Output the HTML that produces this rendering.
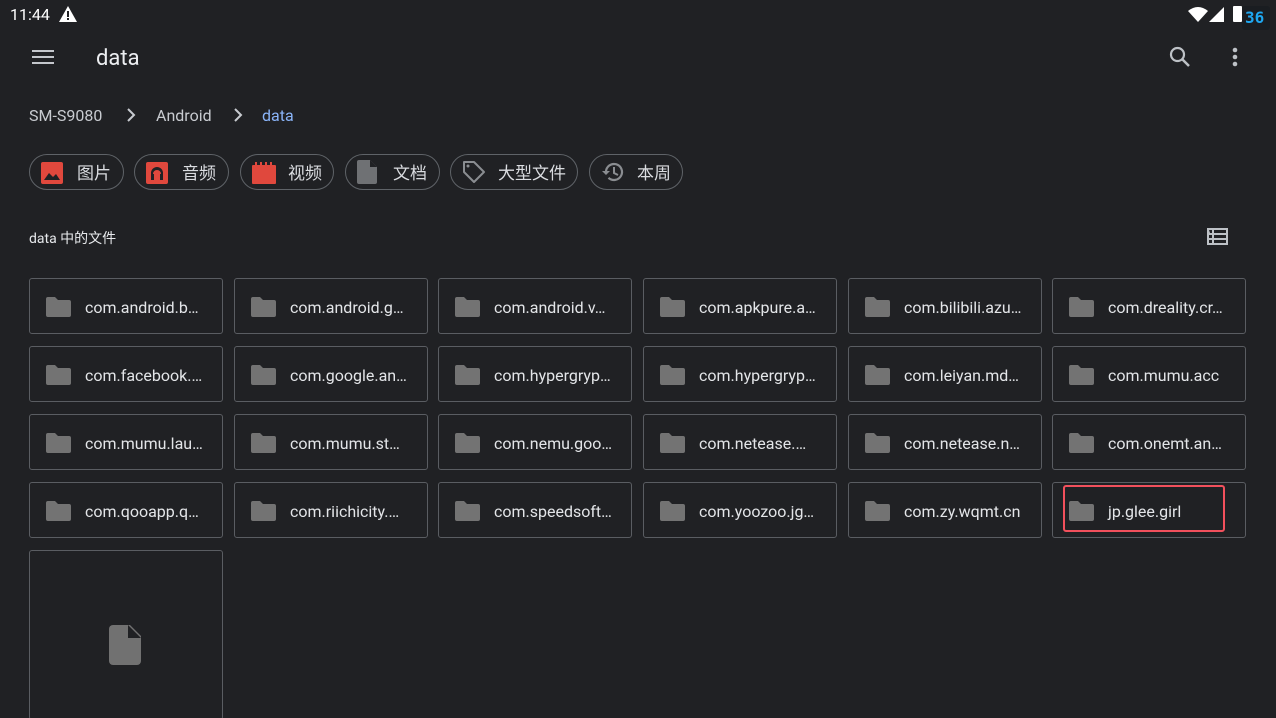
<!DOCTYPE html>
<html><head><meta charset="utf-8"><style>
*{margin:0;padding:0;box-sizing:border-box}
html,body{width:1276px;height:718px;overflow:hidden}
body{background:#202124;position:relative;font-family:"Roboto","Liberation Sans","Noto Sans CJK SC",sans-serif;color:#e8eaed}
.a{position:absolute}
.chip{position:absolute;top:154px;height:36px;border:1px solid #5f6368;border-radius:18px;}
.chip svg{position:absolute;left:11px;top:7px}
.chip span{position:absolute;top:4px;font-size:17px;color:#dadce0;white-space:nowrap}
.card{position:absolute;width:194px;height:56px;border:1.5px solid #5a5d62;border-radius:3px}
.card svg{position:absolute;left:16px;top:18px}
.card span{position:absolute;left:55px;top:19px;font-size:16px;color:#e3e5e8;white-space:nowrap}
</style></head><body>
<div class="a" style="left:10px;top:5px;font-size:16px;color:#fff">11:44</div>
<svg class="a" style="left:59px;top:6px" width="18" height="16" viewBox="0 0 18 16"><path d="M9 0L18 16H0z" fill="#fff"/><rect x="8" y="5" width="2" height="6" fill="#202124"/><rect x="8" y="12" width="2" height="2" fill="#202124"/></svg>
<svg class="a" style="left:1188px;top:7px" width="20" height="15" viewBox="0 0 20 15"><path d="M0 4Q10-4 20 4L10 15z" fill="#fff"/></svg>
<svg class="a" style="left:1209px;top:7px" width="15" height="15"><path d="M15 0V15H0z" fill="#fff"/></svg>
<div class="a" style="left:1233px;top:6px;width:9px;height:16px;background:#fff;border-radius:1px"></div>
<div class="a" style="left:1242px;top:6px;width:28px;height:24px;background:#1a1d21;border-radius:3px;color:#1ea7f0;font-weight:bold;font-size:16px;font-family:'DejaVu Sans Mono',monospace;padding:2px 0 0 3px">36</div>
<svg class="a" style="left:32px;top:50px" width="22" height="15"><rect y="0" width="22" height="2" fill="#c4c7cc"/><rect y="6" width="22" height="2" fill="#c4c7cc"/><rect y="12" width="22" height="2" fill="#c4c7cc"/></svg>
<div class="a" style="left:96px;top:46px;font-size:22px;color:#eceef1">data</div>
<svg class="a" style="left:1169px;top:46px" width="22" height="22" viewBox="0 0 22 22"><circle cx="8.5" cy="8.5" r="6.5" stroke="#bdc1c6" stroke-width="2.2" fill="none"/><path d="M13 13L20 20" stroke="#bdc1c6" stroke-width="2.5"/></svg>
<svg class="a" style="left:1231px;top:47px" width="8" height="22"><circle cx="4" cy="3" r="2.3" fill="#bdc1c6"/><circle cx="4" cy="10" r="2.3" fill="#bdc1c6"/><circle cx="4" cy="17" r="2.3" fill="#bdc1c6"/></svg>
<div class="a" style="left:29px;top:106px;font-size:16px;color:#c8cbd0">SM-S9080</div>
<svg class="a" style="left:126px;top:107px" width="10" height="16"><path d="M2 2L8 8L2 14" stroke="#c8cbd0" stroke-width="2" fill="none"/></svg>
<div class="a" style="left:156px;top:106px;font-size:16px;color:#c8cbd0">Android</div>
<svg class="a" style="left:233px;top:107px" width="10" height="16"><path d="M2 2L8 8L2 14" stroke="#c8cbd0" stroke-width="2" fill="none"/></svg>
<div class="a" style="left:262px;top:106px;font-size:16px;color:#8ab4f8">data</div>

<div class="chip" style="left:29px;width:95px"><svg width="22" height="22"><rect width="22" height="22" rx="2" fill="#e0483d"/><path d="M3 18L8 11L12 15L15 12L19 18z" fill="#202124"/></svg><span style="left:47px">图片</span></div>
<div class="chip" style="left:134px;width:95px"><svg width="22" height="22"><rect width="22" height="22" rx="2" fill="#e0483d"/><path d="M5 18V11a6 6 0 0 1 12 0v7h-3v-6h1a4 4 0 0 0-8 0h1v6z" fill="#202124"/></svg><span style="left:47px">音频</span></div>
<div class="chip" style="left:240px;width:94px"><svg width="24" height="22"><rect y="3" width="24" height="19" rx="1" fill="#e0483d"/><path d="M3 0h2v4h-2zM8 0h2v4h-2zM13 0h2v4h-2zM18 0h2v4h-2z" fill="#e0483d"/></svg><span style="left:47px">视频</span></div>
<div class="chip" style="left:345px;width:95px"><svg width="20" height="24" style="top:5px"><path d="M2 0h11l7 7v15a2 2 0 0 1-2 2H2a2 2 0 0 1-2-2V2a2 2 0 0 1 2-2z" fill="#6f7174"/><path d="M13 0v7h7z" fill="#202124"/></svg><span style="left:47px">文档</span></div>
<div class="chip" style="left:450px;width:128px"><svg width="24" height="24" style="top:5px"><path d="M2 2h10l10 10-10 10L2 12z" stroke="#8a8d91" stroke-width="2" fill="none" stroke-linejoin="round"/><circle cx="6" cy="6" r="1.5" fill="#8a8d91"/></svg><span style="left:47px">大型文件</span></div>
<div class="chip" style="left:589px;width:94px"><svg width="24" height="24" style="top:5px"><path d="M5 12a8 8 0 1 1 2.5 5.8" stroke="#8a8d91" stroke-width="2.2" fill="none"/><path d="M1 11h8l-4 4z" fill="#8a8d91"/><path d="M13 7v6l4 2" stroke="#8a8d91" stroke-width="2" fill="none"/></svg><span style="left:47px">本周</span></div>

<div class="a" style="left:29px;top:228px;font-size:14px;color:#e8eaed">data 中的文件</div>
<svg class="a" style="left:1207px;top:228px" width="21" height="17"><rect x="0" y="0" width="21" height="17" fill="#bdc1c6"/><path d="M2 2h3v3h-2zM7 2h12v3H7zM2 7h3v3H2zM7 7h12v3H7zM2 12h3v3H2zM7 12h12v3H7z" fill="#202124"/></svg>

<div id="g"></div>
<div class="card" style="left:29px;top:550px;height:170px"><svg width="32" height="40" style="left:79px;top:74px" viewBox="0 0 32 40"><path d="M4 0h17l11 11v25a4 4 0 0 1-4 4H4a4 4 0 0 1-4-4V4a4 4 0 0 1 4-4z" fill="#717171"/><path d="M19 0v13h13z" fill="#202124"/></svg></div>
<div class="a" style="left:1063px;top:485px;width:162px;height:47px;border:2.5px solid #f2505c;border-radius:3px"></div>
<script>
var n=[["com.android.b…","com.android.g…","com.android.v…","com.apkpure.a…","com.bilibili.azu…","com.dreality.cr…"],["com.facebook.…","com.google.an…","com.hypergryp…","com.hypergryp…","com.leiyan.md…","com.mumu.acc"],["com.mumu.lau…","com.mumu.st…","com.nemu.goo…","com.netease.…","com.netease.n…","com.onemt.an…"],["com.qooapp.q…","com.riichicity.…","com.speedsoft…","com.yoozoo.jg…","com.zy.wqmt.cn","jp.glee.girl"]];
var xs=[29,234,438,643,848,1052],h="";
for(var r=0;r<4;r++)for(var c=0;c<6;c++)h+='<div class="card" style="left:'+xs[c]+'px;top:'+(278+r*68)+'px"><svg width="25" height="20" viewBox="0 0 25 20"><path d="M2 0h7l3 3h11a2 2 0 0 1 2 2v13a2 2 0 0 1-2 2H2a2 2 0 0 1-2-2V2a2 2 0 0 1 2-2z" fill="#737373"/></svg><span>'+n[r][c]+'</span></div>';
document.getElementById("g").innerHTML=h;
</script>
</body></html>
